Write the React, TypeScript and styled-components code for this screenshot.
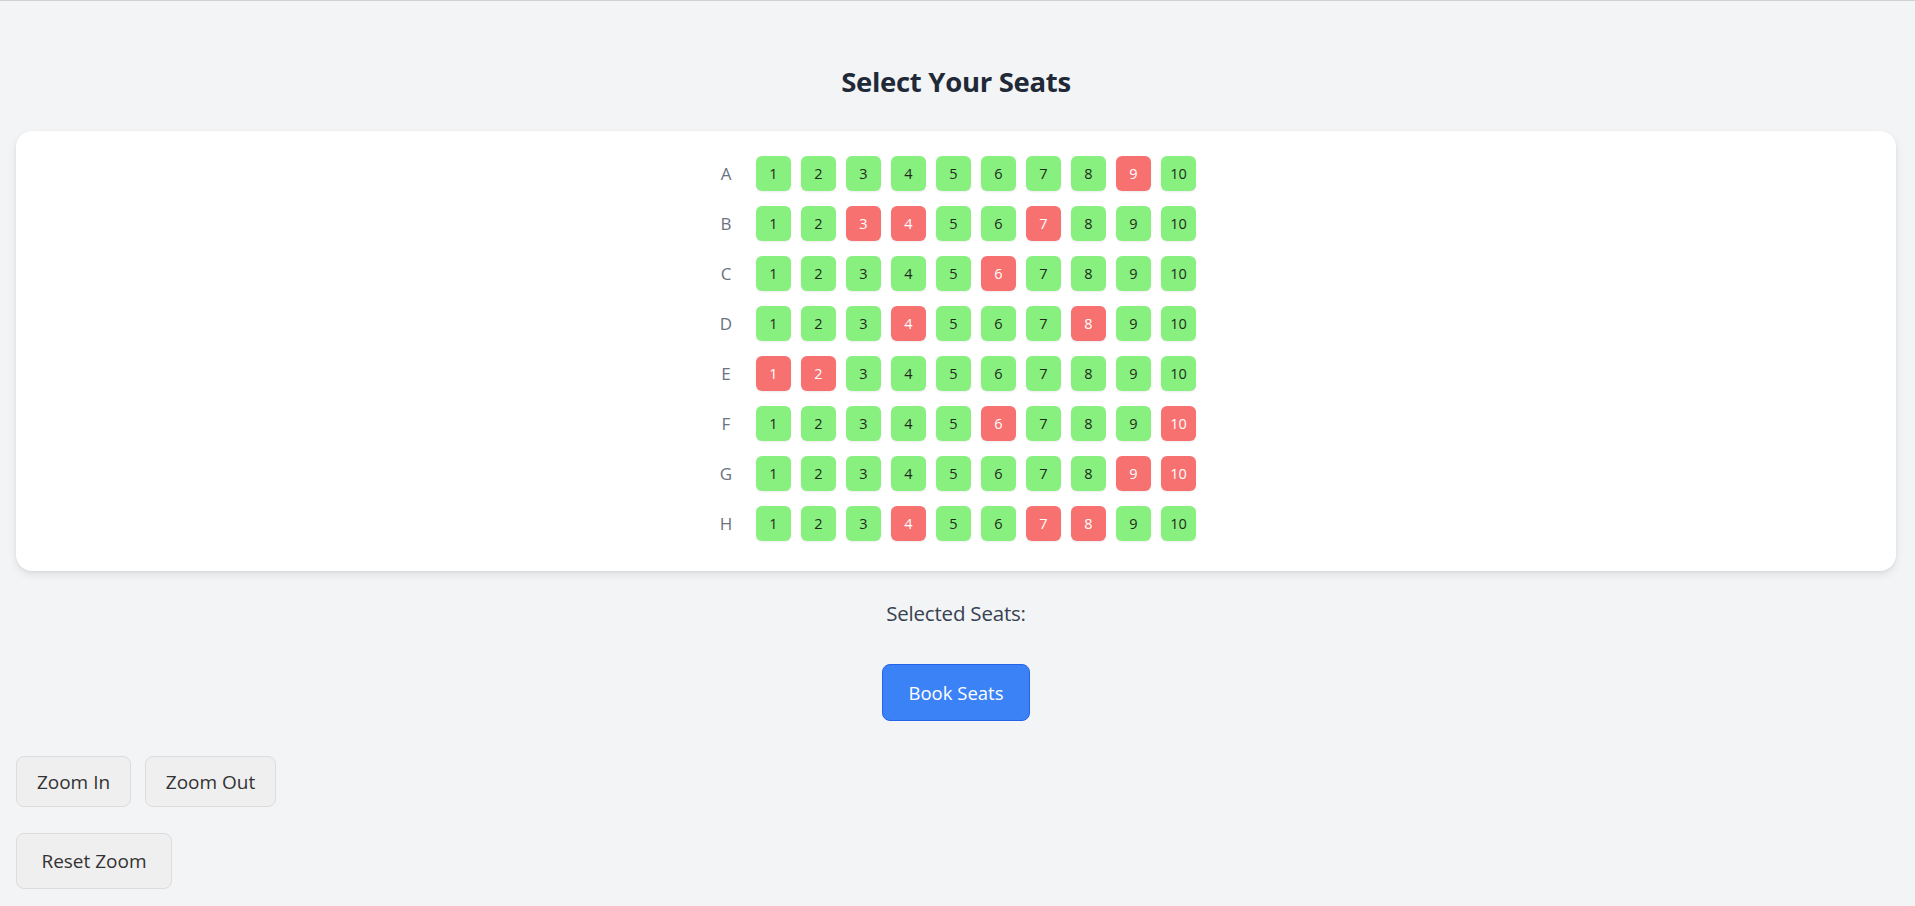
import React from "react";
import styled, { createGlobalStyle } from "styled-components";

const GlobalStyle = createGlobalStyle`
  html, body {
    margin: 0;
    padding: 0;
    background: #f3f4f6;
  }
  body {
    border-top: 1px solid #cfd1d5;
    font-family: "Open Sans", "Noto Sans", "Liberation Sans", sans-serif;
  }
`;

const Page = styled.div`
  display: flex;
  flex-direction: column;
  padding: 65px 19px 16px 16px;
`;

const Title = styled.h1`
  margin: 0 0 33px;
  height: 32px;
  line-height: 32px;
  text-align: center;
  font-size: 27.5px;
  font-weight: 700;
  color: #1f2937;
  letter-spacing: -0.3px;
`;

const Card = styled.div`
  background: #ffffff;
  border-radius: 16px;
  box-shadow: 0 4px 8px rgba(0, 0, 0, 0.08), 0 1px 3px rgba(0, 0, 0, 0.06);
  padding: 25px 0 30px;
  display: flex;
  flex-direction: column;
  align-items: center;
  gap: 15px;
`;

const Row = styled.div`
  display: flex;
  align-items: center;
  gap: 20px;
`;

const RowLabel = styled.span`
  width: 20px;
  text-align: center;
  font-size: 17px;
  color: #6b7280;
`;

const Seats = styled.div`
  display: flex;
  gap: 10px;
`;

const Seat = styled.button<{ $taken: boolean }>`
  width: 35px;
  height: 35px;
  padding: 0;
  border: none;
  border-radius: 6px;
  display: flex;
  align-items: center;
  justify-content: center;
  font-family: inherit;
  font-size: 14.5px;
  background: ${(p) => (p.$taken ? "#f87171" : "#88f07e")};
  color: ${(p) => (p.$taken ? "#ffffff" : "#1f2a1f")};
  box-shadow: 0 1px 2px rgba(0, 0, 0, 0.08);
  cursor: pointer;
`;

const Selected = styled.p`
  margin: 30px 0 0;
  height: 24px;
  line-height: 24px;
  text-align: center;
  font-size: 20.5px;
  color: #374151;
  letter-spacing: -0.2px;
`;

const BookButton = styled.button`
  align-self: center;
  margin-top: 39px;
  width: 148px;
  height: 57px;
  border: 1px solid #2563eb;
  border-radius: 8px;
  background: #3b82f6;
  color: #ffffff;
  font-family: inherit;
  font-size: 18.5px;
  cursor: pointer;
`;

const ZoomRow = styled.div`
  display: flex;
  gap: 14px;
  margin-top: 35px;
`;

const ZoomButton = styled.button<{ $w: number; $h: number }>`
  width: ${(p) => p.$w}px;
  height: ${(p) => p.$h}px;
  padding: 0;
  border: 1px solid #dcdcdc;
  border-radius: 8px;
  background: #efefef;
  color: #333333;
  font-family: inherit;
  font-size: 19px;
  cursor: pointer;
`;

const ResetRow = styled.div`
  display: flex;
  margin-top: 26px;
`;

const taken: Record<string, number[]> = {
  A: [9],
  B: [3, 4, 7],
  C: [6],
  D: [4, 8],
  E: [1, 2],
  F: [6, 10],
  G: [9, 10],
  H: [4, 7, 8],
};

const rows = ["A", "B", "C", "D", "E", "F", "G", "H"];
const nums = [1, 2, 3, 4, 5, 6, 7, 8, 9, 10];

export default function App() {
  return (
    <>
      <GlobalStyle />
      <Page>
        <Title>Select Your Seats</Title>
        <Card>
          {rows.map((r) => (
            <Row key={r}>
              <RowLabel>{r}</RowLabel>
              <Seats>
                {nums.map((n) => (
                  <Seat key={n} $taken={taken[r].includes(n)}>
                    {n}
                  </Seat>
                ))}
              </Seats>
            </Row>
          ))}
        </Card>
        <Selected>Selected Seats:</Selected>
        <BookButton>Book Seats</BookButton>
        <ZoomRow>
          <ZoomButton $w={115} $h={51}>Zoom In</ZoomButton>
          <ZoomButton $w={131} $h={51}>Zoom Out</ZoomButton>
        </ZoomRow>
        <ResetRow>
          <ZoomButton $w={156} $h={56}>Reset Zoom</ZoomButton>
        </ResetRow>
      </Page>
    </>
  );
}
